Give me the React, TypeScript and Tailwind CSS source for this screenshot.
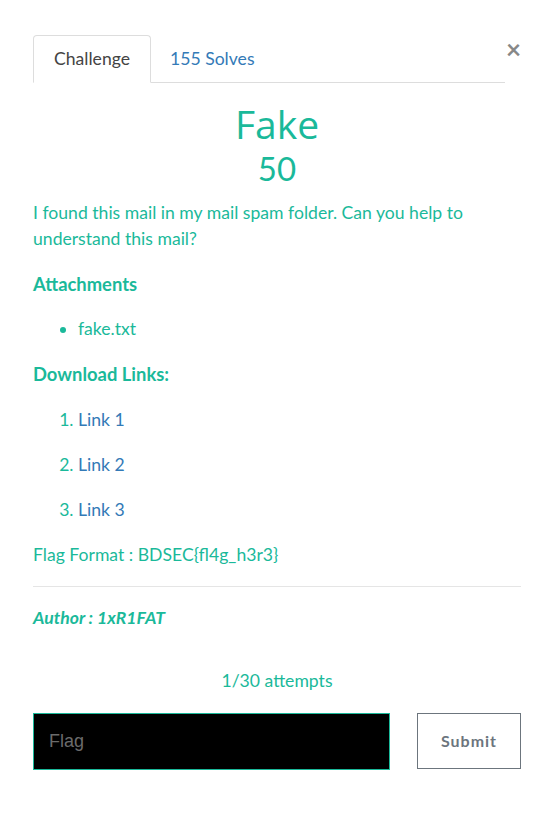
import React from "react";

const teal = "text-[#1ab99a]";

export default function App() {
  return (
    <div className="min-h-[824px] w-[557px] bg-white font-['Lato','Liberation_Sans',sans-serif] text-[17.6px]">
      <div className="pl-[33px] pr-[36px] pt-[35px]">
        {/* tabs + close */}
        <div className="flex items-start">
          <div className="flex flex-1 border-b border-[#dddddd]">
            <div className="-mb-px rounded-t border border-b-white border-[#dddddd] bg-white px-[20px] py-[11px] text-[#444] leading-[23px]">
              Challenge
            </div>
            <div className="px-[19px] py-[12px] leading-[23px] text-[#337ab7]">155 Solves</div>
          </div>
          <button className="mt-[3px] ml-[1px] w-[15px] text-[26px] font-bold leading-[22px] text-[#888]">×</button>
        </div>

        <h1 className={`mt-[18px] text-center font-['Open_Sans','Lato',sans-serif] font-normal text-[39px] leading-[46px] ${teal}`}>Fake</h1>
        <h3 className={`mt-[1px] text-center text-[33px] leading-[40px] ${teal}`}>50</h3>

        <div className={`${teal}`}>
          <p className="mt-[12px] leading-[26px]">
            I found this mail in my mail spam folder. Can you help to understand this mail?
          </p>
          <h4 className="mt-[19px] text-[18.4px] font-bold leading-[26px]">Attachments</h4>
          <ul className="mt-[19px] list-disc pl-[45px] marker:text-[#1ab99a]">
            <li className="leading-[26px]">fake.txt</li>
          </ul>
          <h4 className="mt-[19px] text-[18.4px] font-bold leading-[26px]">Download Links:</h4>
          <ol className="mt-[20px] list-decimal pl-[45px]">
            <li className="leading-[26px]"><span className="text-[#337ab7]">Link 1</span></li>
            <li className="mt-[19px] leading-[26px]"><span className="text-[#337ab7]">Link 2</span></li>
            <li className="mt-[19px] leading-[26px]"><span className="text-[#337ab7]">Link 3</span></li>
          </ol>
          <p className="mt-[19px] leading-[26px]">Flag Format : BDSEC{"{"}fl4g_h3r3{"}"}</p>
          <hr className="mt-[18px] border-[#e5e5e5]" />
          <p className="mt-[18px] font-bold italic leading-[26px]">Author : 1xR1FAT</p>
          <p className="mt-[37px] text-center leading-[26px]">1/30 attempts</p>
        </div>

        <div className="mt-[19px] flex gap-[27px]">
          <div className="flex h-[57px] flex-1 items-center border border-[#1ab99a] bg-black px-[15px] text-[#6b6b6b] text-[18px] font-['Liberation_Sans',sans-serif]">
            Flag
          </div>
          <button className="h-[56px] w-[104px] border border-[#6c757d] bg-white text-[16px] font-bold tracking-[1px] text-[#6c757d]">
            Submit
          </button>
        </div>
      </div>
    </div>
  );
}
